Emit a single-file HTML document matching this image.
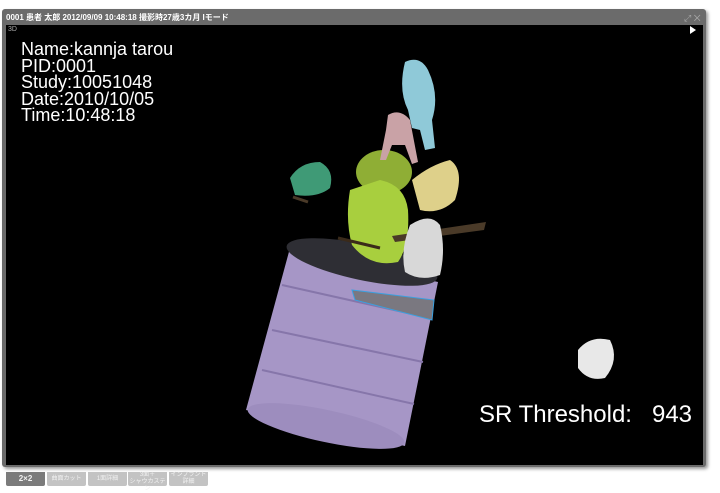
<!DOCTYPE html>
<html><head><meta charset="utf-8"><style>
html,body{margin:0;padding:0;background:#fff;width:720px;height:490px;overflow:hidden;font-family:"Liberation Sans","Noto Sans CJK JP",sans-serif}
.frame{position:absolute;left:2px;top:9px;width:704px;height:458px;background:#6b6b6b;border-radius:3px;box-shadow:2px 2px 3px #999}
.title{position:absolute;left:6px;top:12px;color:#fff;font-size:8px;font-weight:bold}
.view{position:absolute;left:6px;top:25px;width:697px;height:440px;background:#000}
.info{position:absolute;left:21px;top:41px;color:#fff;font-size:18px;line-height:16.5px}
.sr{position:absolute;left:479px;top:401px;color:#fff;font-size:24px;white-space:pre}
.tab{position:absolute;top:472px;height:14px;width:39px;background:#c3c3c3;color:#f2f2f2;font-size:6px;text-align:center;line-height:7px;border-radius:0 0 2px 2px}
</style></head><body>
<div class="frame"></div>
<div class="title">0001 患者 太郎 2012/09/09 10:48:18 撮影時27歳3カ月 Iモード</div>
<div style="position:absolute;left:684px;top:13px;color:#aaa;font-size:9px">⤢ ✕</div>
<div class="view">
<div style="position:absolute;left:2px;top:1px;color:#aaa;font-size:7px">3D</div>
<div style="position:absolute;left:684px;top:1px;width:0;height:0;border-left:6px solid #fff;border-top:4px solid transparent;border-bottom:4px solid transparent"></div>
</div>
<svg style="position:absolute;left:0;top:0" width="720" height="490">
<polygon points="290,248 438,282 405,446 246,410" fill="#a696c6"/>
<ellipse cx="326" cy="426" rx="80" ry="16" transform="rotate(12 326 426)" fill="#9d8dbe"/>
<g stroke="#8676aa" stroke-width="2" fill="none">
<line x1="282" y1="285" x2="430" y2="318"/><line x1="272" y1="330" x2="423" y2="362"/><line x1="262" y1="370" x2="414" y2="404"/></g>
<ellipse cx="362" cy="262" rx="77" ry="18" transform="rotate(12 362 262)" fill="#2e2e34"/>
<ellipse cx="384" cy="172" rx="28" ry="22" fill="#8fae35"/>
<path d="M350,190 Q345,220 352,245 Q370,268 398,262 Q410,245 408,210 Q405,185 380,180 Z" fill="#a8cf3e"/>
<line x1="338" y1="238" x2="380" y2="248" stroke="#3a2a1a" stroke-width="3"/>
<polygon points="392,236 486,222 484,230 395,242" fill="#4a3a28"/>
<path d="M410,225 Q430,212 440,225 Q446,250 440,275 Q420,282 405,272 Q400,250 410,225Z" fill="#d8d8d8"/>
<path d="M412,180 Q430,165 450,160 Q465,170 455,200 Q440,215 420,210 Z" fill="#ded08a"/>
<path d="M405,62 Q420,55 428,70 Q440,95 432,120 L435,148 L425,150 L420,130 L412,128 L408,110 Q398,90 405,62Z" fill="#8fc9d8"/>
<path d="M388,115 Q400,108 410,120 L418,162 L412,164 L405,145 L392,145 L386,160 L380,160 L386,130Z" fill="#c9a2a6"/>
<path d="M290,178 Q300,162 320,162 Q335,170 330,188 Q318,198 295,195Z" fill="#3f9a76"/>
<line x1="293" y1="197" x2="308" y2="202" stroke="#4a3a28" stroke-width="3"/>
<path d="M578,350 Q590,335 610,340 Q620,360 605,378 Q588,382 578,368Z" fill="#e8e8e8"/>
<polygon points="352,290 434,300 432,320 355,300" fill="#7a7880" stroke="#3aa0e0" stroke-width="1"/>
</svg>
<div class="info">Name:kannja tarou<br>PID:0001<br>Study:10051048<br>Date:2010/10/05<br>Time:10:48:18</div>
<div class="sr">SR Threshold:   943</div>
<div class="tab" style="left:6px;background:#7b7b7b;font-weight:bold;line-height:14px;font-size:8px">2×2</div>
<div class="tab" style="left:47px;line-height:14px">曲面カット</div>
<div class="tab" style="left:88px;line-height:14px">1面詳細</div>
<div class="tab" style="left:128px">3面＋<br>シャウカステン</div>
<div class="tab" style="left:169px">インプラント<br>詳細</div>
</body></html>
